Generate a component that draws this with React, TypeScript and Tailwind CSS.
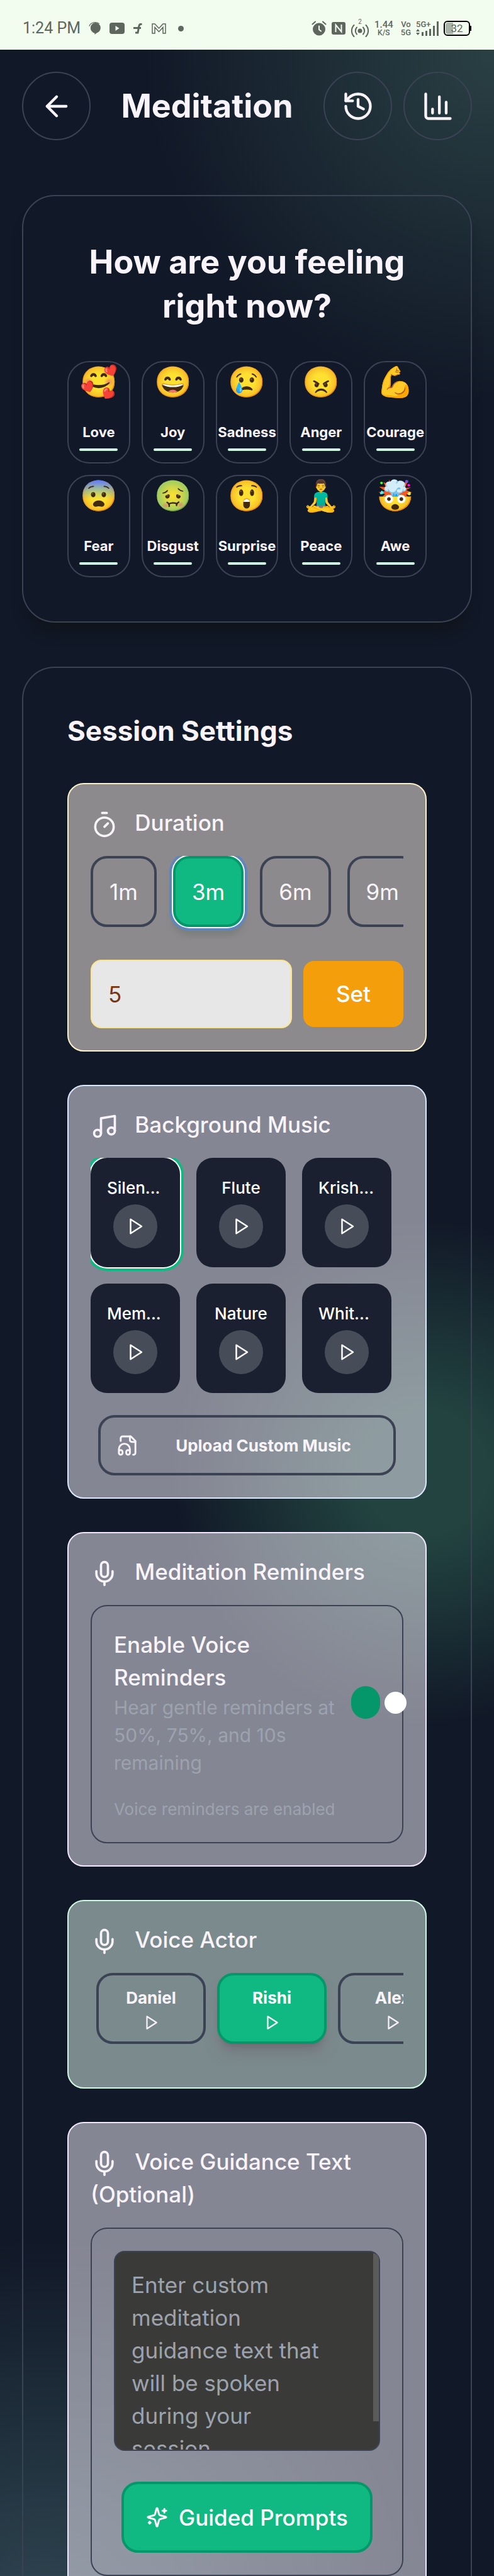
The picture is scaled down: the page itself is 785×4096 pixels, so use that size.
import { useState, type ReactNode } from "react";
import {
  ArrowLeft,
  ChartColumn,
  History,
  Mic,
  Music,
  Timer,
} from "lucide-react";
import clsx from "clsx";

const moods = [
  { emoji: "🥰", name: "Love" },
  { emoji: "😄", name: "Joy" },
  { emoji: "😢", name: "Sadness" },
  { emoji: "😠", name: "Anger" },
  { emoji: "💪", name: "Courage" },
  { emoji: "😨", name: "Fear" },
  { emoji: "🤢", name: "Disgust" },
  { emoji: "😲", name: "Surprise" },
  { emoji: "🧘‍♂️", name: "Peace" },
  { emoji: "🤯", name: "Awe" },
];

const durations = [1, 3, 6, 9];
const tracks = ["Silen...", "Flute", "Krish...", "Mem...", "Nature", "Whit..."];
const voices = ["Daniel", "Rishi", "Alex"];

const PlayIcon = ({ className }: { className?: string }) => (
  <svg
    viewBox="0 0 24 24"
    fill="none"
    stroke="currentColor"
    strokeWidth="2"
    strokeLinecap="round"
    strokeLinejoin="round"
    className={className}
  >
    <polygon points="6 3 20 12 6 21 6 3" />
  </svg>
);

const UploadIcon = () => (
  <svg
    viewBox="0 0 24 24"
    fill="none"
    stroke="currentColor"
    strokeWidth="2"
    strokeLinecap="round"
    strokeLinejoin="round"
    className="size-[35px] shrink-0"
  >
    <path d="M17.5 22h.5a2 2 0 0 0 2-2V7l-5-5H6a2 2 0 0 0-2 2v3" />
    <path d="M14 2v4a2 2 0 0 0 2 2h4" />
    <path d="M2 19a2 2 0 1 1 4 0v1a2 2 0 1 1-4 0v-4a6 6 0 0 1 12 0v4a2 2 0 1 1-4 0v-1a2 2 0 1 1 4 0" />
  </svg>
);

const SparklesIcon = () => (
  <svg
    viewBox="0 0 24 24"
    fill="none"
    stroke="currentColor"
    strokeWidth="2"
    strokeLinecap="round"
    strokeLinejoin="round"
    className="size-[35px] shrink-0"
  >
    <path d="M9.937 15.5A2 2 0 0 0 8.5 14.063l-6.135-1.582a.5.5 0 0 1 0-.962L8.5 9.936A2 2 0 0 0 9.937 8.5l1.582-6.135a.5.5 0 0 1 .963 0L14.063 8.5A2 2 0 0 0 15.5 9.937l6.135 1.581a.5.5 0 0 1 0 .964L15.5 14.063a2 2 0 0 0-1.437 1.437l-1.582 6.135a.5.5 0 0 1-.963 0z" />
    <path d="M20 3v4" />
    <path d="M22 5h-4" />
    <path d="M4 17v2" />
    <path d="M5 18H3" />
  </svg>
);

const StatusBar = () => (
  <div className="flex h-[79px] items-center justify-between bg-[#f2fcef] px-[36px] pt-[11px] font-[Roboto,sans-serif] text-[#5f665e]">
    <div className="flex items-center gap-[13px]">
      <span className="text-[25px] leading-[26px]">1:24 PM</span>
      <svg viewBox="0 0 19 19" className="size-[20px]" fill="currentColor">
        <path d="M10 1a8.500 8 0 0 1 2 15.600L9 19v-2.200A8 8 0 0 1 10 1z" />
        <path
          d="M.8 6.500C2 2.500 5.500.6 9.500.6c3 0 5 .8 6.500 2"
          fill="none"
          stroke="currentColor"
        />
      </svg>
      <svg viewBox="0 0 24 18" className="h-[18px] w-[24px]">
        <rect width="24" height="18" rx="4" fill="currentColor" />
        <path d="M9.500 5v8l6-4z" fill="#f2fcef" />
      </svg>
      <svg
        viewBox="0 0 15 18"
        className="h-[18px] w-[15px]"
        fill="none"
        stroke="currentColor"
        strokeWidth="3"
      >
        <path d="M14.500 2.500h-2c-2.500 0-2.500 2-3 5L8 16H4M1 8.500h12" />
      </svg>
      <svg
        viewBox="0 0 23 17"
        className="ml-[2px] h-[17px] w-[23px]"
        fill="none"
        stroke="currentColor"
        strokeWidth="1.500"
      >
        <path d="M1 16V1h4l6.500 7L18 1h4v15h-4V6.500l-6.500 7L5 6.500V16z" />
      </svg>
      <span className="ml-[6px] size-[9px] rounded-full bg-current" />
    </div>

    <div className="flex items-center gap-[8px]">
      <svg
        viewBox="0 0 24 24"
        className="size-[24px]"
        fill="none"
        stroke="currentColor"
        strokeWidth="2"
        strokeLinecap="round"
      >
        <circle cx="12" cy="13.500" r="9" fill="currentColor" />
        <path d="M1.500 5.500 6 1.500M22.500 5.500 18 1.500" />
        <path d="M12 8.500v5.500l3 2.500" stroke="#f2fcef" />
      </svg>
      <svg viewBox="0 0 22 20" className="h-[20px] w-[22px]">
        <rect width="22" height="20" rx="3" fill="currentColor" />
        <path
          d="M6.500 16V4.500l9 11V4"
          fill="none"
          stroke="#f2fcef"
          strokeWidth="2"
        />
      </svg>
      <div className="flex flex-col items-center">
        <span className="text-[10px] leading-[8px]">2</span>
        <svg
          viewBox="0 0 30 20"
          className="h-[20px] w-[30px]"
          fill="none"
          stroke="currentColor"
          strokeWidth="2"
          strokeLinecap="round"
        >
          <circle cx="15" cy="10" r="2.500" fill="currentColor" />
          <path d="M10 4.500a8 8 0 0 0 0 11M20 4.500a8 8 0 0 1 0 11M5.500 1a13 13 0 0 0 0 18M24.500 1a13 13 0 0 1 0 18" />
        </svg>
      </div>
      <div className="flex flex-col items-center font-medium">
        <span className="text-[15px] leading-[14px]">1.44</span>
        <span className="text-[12px] leading-[12px]">K/S</span>
      </div>
      <div className="ml-[4px] flex flex-col items-center text-[13px] leading-[13px] font-medium">
        <span>Vo</span>
        <span>5G</span>
      </div>
      <div className="flex flex-col">
        <span className="text-[13px] leading-[13px] font-medium">5G+</span>
        <svg viewBox="0 0 36 13" className="h-[13px] w-[36px] overflow-visible">
          <path
            d="M0 5l3-4 3 4zM0 7l3 4 3-4zM9 6h3v6H9zM15 4h3v8h-3zM21 1h3v11h-3zM27-4h3v16h-3zM33-11h3v23h-3z"
            fill="currentColor"
          />
        </svg>
      </div>
      <div className="flex items-center">
        <div className="relative flex h-[24px] w-[42px] items-center justify-center overflow-hidden rounded-[6px] border-2 border-black">
          <span className="absolute inset-y-[1px] left-[1px] w-[12px] rounded-l-[4px] bg-[#a9b2a7]" />
          <span className="relative text-[17px] leading-[20px]">32</span>
        </div>
        <span className="h-[8px] w-[2px] bg-black" />
      </div>
    </div>
  </div>
);

const RoundButton = ({
  label,
  children,
}: {
  label: string;
  children: ReactNode;
}) => (
  <button
    aria-label={label}
    className="flex size-[109px] items-center justify-center rounded-full border-2 border-[#3b4254]"
  >
    {children}
  </button>
);

const SettingsCard = ({
  icon,
  title,
  className,
  children,
}: {
  icon: ReactNode;
  title: string;
  className: string;
  children: ReactNode;
}) => (
  <section className={clsx("rounded-[26px] border-2 p-[35px]", className)}>
    <h3 className="mb-[27px] text-[35px] leading-[52px] font-medium">
      {icon} {title}
    </h3>
    {children}
  </section>
);

const iconClass = "mr-[17px] inline size-[44px] align-middle";

const App = () => {
  const [duration, setDuration] = useState(3);
  const [custom, setCustom] = useState("5");
  const [track, setTrack] = useState("Silen...");
  const [reminders, setReminders] = useState(true);
  const [voice, setVoice] = useState("Rishi");
  const [guidance, setGuidance] = useState("");

  return (
    <div className="h-screen overflow-hidden bg-[#111827] bg-[radial-gradient(circle_558px_at_100%_78px,#2a4044,transparent),radial-gradient(circle_402px_at_86%_2341px,#224340_25%,transparent),radial-gradient(circle_618px_at_9%_4176px,#2f4752,transparent)] font-[Inter,sans-serif] text-[#f8f4f9]">
      <StatusBar />

      <header className="flex items-center justify-between px-[35px] pt-[35px]">
        <RoundButton label="Back">
          <ArrowLeft className="size-[52px]" />
        </RoundButton>
        <h1 className="text-[52px] leading-[70px] font-bold">Meditation</h1>
        <div className="flex gap-[18px]">
          <RoundButton label="History">
            <History className="size-[52px]" />
          </RoundButton>
          <RoundButton label="Statistics">
            <ChartColumn className="size-[52px]" />
          </RoundButton>
        </div>
      </header>

      <main className="px-[35px] pt-[87px]">
        <section className="rounded-[52px] border-2 border-[#3b4254] p-[70px] shadow-[0_22px_22px_-10px_rgba(15,20,24,0.9)]">
          <h2 className="text-center text-[52px] leading-[70px] font-bold">
            How are you feeling right now?
          </h2>
          <div className="mt-[52px] grid grid-cols-5 gap-[18px]">
            {moods.map((mood) => (
              <button
                key={mood.name}
                className="flex h-[163px] flex-col items-center rounded-[35px] border-2 border-[#3b4254]"
              >
                <span className="text-[48px] leading-[62px]">{mood.emoji}</span>
                <span className="mt-[36px] text-[22px] leading-[26px] font-bold">
                  {mood.name}
                </span>
                <span className="mt-[13px] h-[4px] w-[61px] rounded-full bg-[#d1fae5]" />
              </button>
            ))}
          </div>
        </section>

        <section className="mt-[70px] rounded-[52px] border-2 border-[#3b4254] p-[70px]">
          <h2 className="text-[44px] leading-[61px] font-bold">
            Session Settings
          </h2>

          <div className="mt-[52px] flex flex-col gap-[53px]">
            <SettingsCard
              icon={<Timer className={iconClass} />}
              title="Duration"
              className="border-[#fef3c7] bg-[#fff4eb]/52"
            >
              <div className="flex gap-[26px] overflow-hidden pb-[20px]">
                {durations.map((minutes) => (
                  <button
                    key={minutes}
                    onClick={() => setDuration(minutes)}
                    className={clsx(
                      "h-[113px] shrink-0 rounded-[26px] border-4 px-[26px] text-[35px] leading-[52px]",
                      duration === minutes
                        ? "border-[#059669] bg-[#10b981] text-white shadow-[0_0_0_2px_#fff,0_0_0_6px_#5f84be,0_12px_10px_2px_rgba(90,110,95,0.35)]"
                        : "border-[#3b4254]",
                    )}
                  >
                    {minutes}m
                  </button>
                ))}
              </div>
              <div className="mt-[32px] flex items-center gap-[18px]">
                <input
                  aria-label="Custom duration in minutes"
                  value={custom}
                  onChange={(e) => setCustom(e.target.value)}
                  className="h-[109px] min-w-0 flex-1 rounded-[17px] border-2 border-[#fde68a] bg-[#e7e7e7] px-[26px] text-[35px] text-[#78350f]"
                />
                <button
                  onClick={() => setDuration(Number(custom))}
                  className="h-[105px] rounded-[17px] bg-[#f59e0b] px-[52px] text-[35px] font-medium text-white"
                >
                  Set
                </button>
              </div>
            </SettingsCard>

            <SettingsCard
              icon={<Music className={iconClass} />}
              title="Background Music"
              className="border-[#dbeafe] bg-[#f9f4ff]/50"
            >
              <div className="flex flex-wrap gap-[26px] overflow-hidden pb-[10px]">
                {tracks.map((name) => (
                  <button
                    key={name}
                    onClick={() => setTrack(name)}
                    className={clsx(
                      "flex h-[174px] w-[142px] flex-col items-center justify-center gap-[9px] rounded-[26px] bg-[#1a2030] px-[26px] text-white",
                      track === name &&
                        "shadow-[0_0_0_2px_#fff,0_0_0_6px_#10b981]",
                    )}
                  >
                    <span
                      className={clsx(
                        "w-full text-[26px] leading-[35px] font-medium whitespace-nowrap",
                        name.endsWith("...") ? "text-left" : "text-center",
                      )}
                    >
                      {name}
                    </span>
                    <span className="flex size-[70px] items-center justify-center rounded-full bg-white/20">
                      <PlayIcon className="size-[30px]" />
                    </span>
                  </button>
                ))}
              </div>
              <button className="mx-[12px] mt-[25px] flex h-[96px] w-[calc(100%-24px)] items-center rounded-[26px] border-4 border-[#3b4254] px-[26px]">
                <UploadIcon />
                <span className="ml-[17px] flex-1 text-[26px] leading-[35px] font-bold">
                  Upload Custom Music
                </span>
              </button>
            </SettingsCard>

            <SettingsCard
              icon={<Mic className={iconClass} />}
              title="Meditation Reminders"
              className="border-[#f3e8ff] bg-[#f9f4ff]/50"
            >
              <div className="rounded-[26px] border-2 border-[#3b4254] p-[35px]">
                <div className="flex items-center justify-between">
                  <label htmlFor="reminders" className="flex-1">
                    <span className="block text-[35px] leading-[52px] font-medium">
                      Enable Voice Reminders
                    </span>
                    <span className="block text-[30px] leading-[44px] text-[#9ca3af]">
                      Hear gentle reminders at 50%, 75%, and 10s remaining
                    </span>
                  </label>
                  <input
                    id="reminders"
                    type="checkbox"
                    role="switch"
                    checked={reminders}
                    onChange={(e) => setReminders(e.target.checked)}
                    className="relative h-[52px] w-[46px] shrink-0 appearance-none rounded-full bg-gray-500 after:absolute after:top-[9px] after:left-[5px] after:size-[35px] after:rounded-full after:bg-white checked:bg-[#059669] checked:after:left-[53px]"
                  />
                </div>
                <p className="mt-[34px] text-[26px] leading-[35px] text-[#9ca3af]">
                  Voice reminders are {reminders ? "enabled" : "disabled"}
                </p>
              </div>
            </SettingsCard>

            <SettingsCard
              icon={<Mic className={iconClass} />}
              title="Voice Actor"
              className="border-[#d1fae5] bg-[#e5fcf3]/50"
            >
              <div className="flex gap-[18px] overflow-hidden pb-[34px] pl-[9px]">
                {voices.map((name) => (
                  <button
                    key={name}
                    onClick={() => setVoice(name)}
                    className={clsx(
                      "flex h-[113px] w-[174px] shrink-0 flex-col items-center justify-center gap-[9px] rounded-[26px] border-4",
                      voice === name
                        ? "border-[#059669] bg-[#10b981] text-white shadow-[0_20px_22px_-6px_rgba(110,105,115,0.5),0_8px_10px_-6px_rgba(100,90,95,0.7)]"
                        : "border-[#3b4254]",
                    )}
                  >
                    <span className="text-[26px] leading-[35px] font-bold">
                      {name}
                    </span>
                    <PlayIcon className="size-[26px]" />
                  </button>
                ))}
              </div>
            </SettingsCard>

            <SettingsCard
              icon={<Mic className={iconClass} />}
              title="Voice Guidance Text (Optional)"
              className="border-[#f3e8ff] bg-[#f9f4ff]/50"
            >
              <div className="flex flex-col items-center rounded-[26px] border-2 border-[#3b4254] p-[35px]">
                <div className="relative w-full">
                  <textarea
                    aria-label="Voice guidance text"
                    value={guidance}
                    onChange={(e) => setGuidance(e.target.value)}
                    placeholder="Enter custom meditation guidance text that will be spoken during your session"
                    className="block h-[318px] w-full resize-none overflow-hidden rounded-[17px] border-2 border-[#3b4254] bg-[#3a3b38] py-[26px] pr-[86px] pl-[26px] text-[35px] leading-[52px] placeholder:text-[#9ca3af]"
                  />
                  <span className="absolute top-[4px] right-[2px] h-[267px] w-[9px] rounded-tr-[9px] bg-[#5b5c59]" />
                </div>
                <button className="mt-[49px] flex h-[113px] items-center gap-[17px] rounded-[26px] border-4 border-[#059669] bg-[#10b981] px-[35px] text-[35px] leading-[52px] font-medium whitespace-nowrap text-white">
                  <SparklesIcon />
                  Guided Prompts
                </button>
              </div>
            </SettingsCard>
          </div>
        </section>
      </main>
    </div>
  );
};

export default App;
